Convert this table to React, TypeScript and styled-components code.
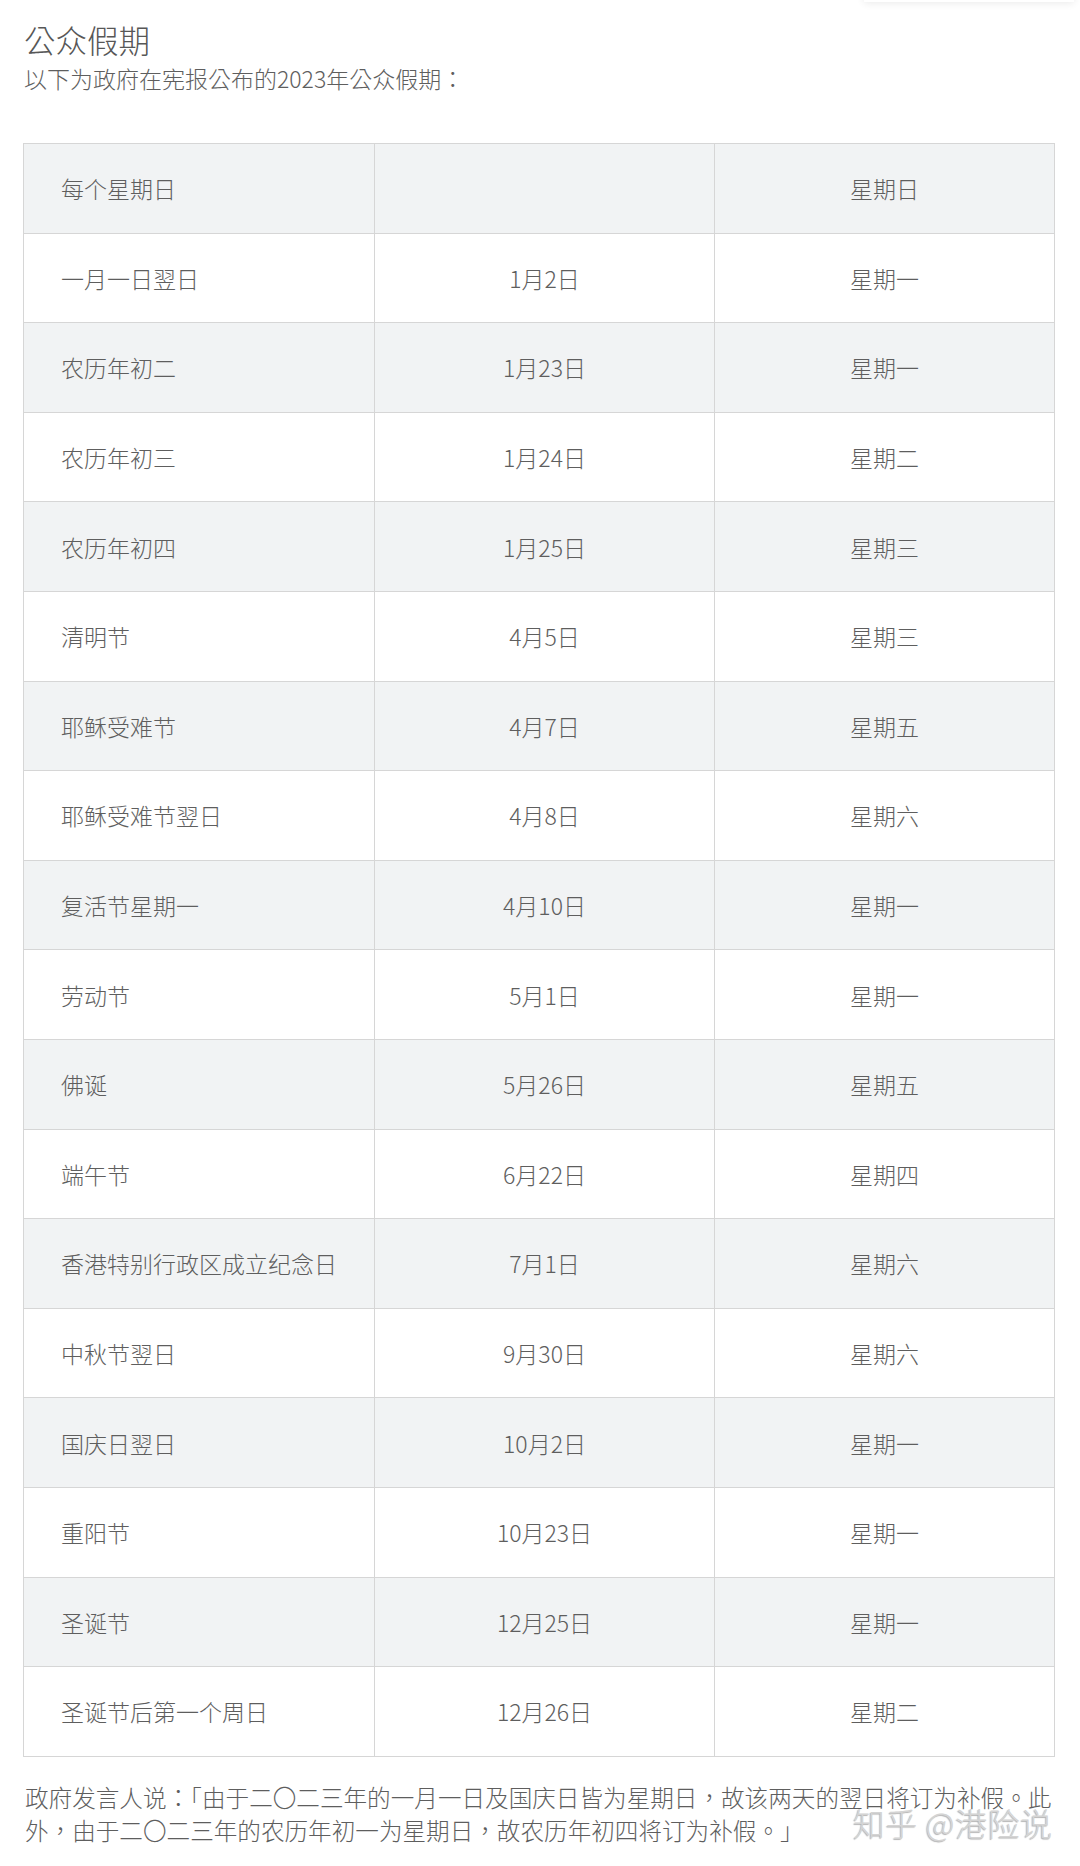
import React from 'react';
import styled, { createGlobalStyle } from 'styled-components';

const GlobalStyle = createGlobalStyle`
    html, body {
        margin: 0;
        padding: 0;
        background: #ffffff;
    }
    body {
        font-family: 'Noto Sans CJK TC', 'Noto Sans CJK SC', 'Noto Sans', sans-serif;
        color: #5e5e5e;
    }
`;

const Page = styled.div`
    position: relative;
    width: 1080px;
    height: 1866px;
    box-sizing: border-box;
    padding: 16px 26px 0 23px;
    overflow: hidden;
`;

// faint edge of a floating card peeking in at the top right
const CardEdge = styled.div`
    position: absolute;
    top: -30px;
    right: 6px;
    width: 210px;
    height: 32px;
    background: #ffffff;
    box-shadow: 0 1px 8px rgba(0, 0, 0, 0.09);
`;

const Title = styled.h2`
    margin: 0 0 0 1px;
    font-size: 31.5px;
    font-weight: 300;
    line-height: 46px;
    color: #575757;
`;

const Intro = styled.p`
    margin: 0 0 0 1px;
    font-size: 23px;
    font-weight: 300;
    line-height: 32px;
    color: #5e5e5e;
`;

const Table = styled.table`
    margin-top: 49px;
    width: 1032px;
    border-collapse: collapse;
    table-layout: fixed;
    border: 1px solid #cfcfcf;
    font-size: 23px;
    font-weight: 300;
    color: #5e5e5e;
`;

const Row = styled.tr<{ $shaded: boolean }>`
    background: ${p => (p.$shaded ? '#f1f3f4' : '#ffffff')};
`;

const Cell = styled.td<{ $align?: 'left' | 'center' }>`
    height: 88.6px;
    padding: 0 ${p => (p.$align === 'center' ? '0' : '37px')};
    border: 1px solid #d6d6d6;
    text-align: ${p => p.$align ?? 'left'};
    vertical-align: middle;
    white-space: nowrap;
`;

const Note = styled.p`
    margin: 24px 0 0 2px;
    width: 1031px;
    font-size: 23.6px;
    font-weight: 300;
    line-height: 33px;
    color: #5e5e5e;
`;

const Watermark = styled.div`
    position: absolute;
    left: 853px;
    top: 1802px;
    font-family: 'Noto Sans CJK SC', sans-serif;
    font-size: 32px;
    font-weight: 300;
    line-height: 40px;
    color: #d4d4d4;
    text-shadow: -1px 1px 1px rgba(0, 0, 0, 0.3);
    letter-spacing: 0.5px;
`;

const holidays: [string, string, string][] = [
    ['每个星期日', '', '星期日'],
    ['一月一日翌日', '1月2日', '星期一'],
    ['农历年初二', '1月23日', '星期一'],
    ['农历年初三', '1月24日', '星期二'],
    ['农历年初四', '1月25日', '星期三'],
    ['清明节', '4月5日', '星期三'],
    ['耶稣受难节', '4月7日', '星期五'],
    ['耶稣受难节翌日', '4月8日', '星期六'],
    ['复活节星期一', '4月10日', '星期一'],
    ['劳动节', '5月1日', '星期一'],
    ['佛诞', '5月26日', '星期五'],
    ['端午节', '6月22日', '星期四'],
    ['香港特别行政区成立纪念日', '7月1日', '星期六'],
    ['中秋节翌日', '9月30日', '星期六'],
    ['国庆日翌日', '10月2日', '星期一'],
    ['重阳节', '10月23日', '星期一'],
    ['圣诞节', '12月25日', '星期一'],
    ['圣诞节后第一个周日', '12月26日', '星期二'],
];

const App = () => (
    <>
        <GlobalStyle />
        <Page lang="zh-Hant">
            <CardEdge />
            <Title>公众假期</Title>
            <Intro>以下为政府在宪报公布的2023年公众假期：</Intro>
            <Table>
                <colgroup>
                    <col style={{ width: '351px' }} />
                    <col style={{ width: '340px' }} />
                    <col style={{ width: '340px' }} />
                </colgroup>
                <tbody>
                    {holidays.map(([name, date, weekday], i) => (
                        <Row key={name} $shaded={i % 2 === 0}>
                            <Cell>{name}</Cell>
                            <Cell $align="center">{date}</Cell>
                            <Cell $align="center">{weekday}</Cell>
                        </Row>
                    ))}
                </tbody>
            </Table>
            <Note>
                政府发言人说：「由于二〇二三年的一月一日及国庆日皆为星期日，故该两天的翌日将订为补假。此外，由于二〇二三年的农历年初一为星期日，故农历年初四将订为补假。」
            </Note>
            <Watermark>知乎 @港险说</Watermark>
        </Page>
    </>
);

export default App;
